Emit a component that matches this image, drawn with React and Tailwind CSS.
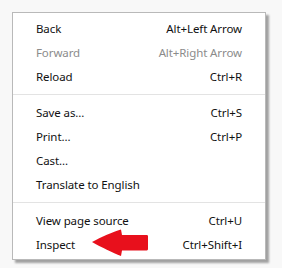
import React from 'react';

const groups = [
  [
    { label: 'Back', shortcut: 'Alt+Left Arrow' },
    { label: 'Forward', shortcut: 'Alt+Right Arrow', disabled: true },
    { label: 'Reload', shortcut: 'Ctrl+R' },
  ],
  [
    { label: 'Save as...', shortcut: 'Ctrl+S' },
    { label: 'Print...', shortcut: 'Ctrl+P' },
    { label: 'Cast...' },
    { label: 'Translate to English' },
  ],
  [
    { label: 'View page source', shortcut: 'Ctrl+U' },
    { label: 'Inspect', shortcut: 'Ctrl+Shift+I' },
  ],
];

function Row({ item }) {
  return (
    <div
      className={`flex h-[24px] items-center justify-between pl-[23px] pr-[23px] ${
        item.disabled ? 'text-[#8b8b8b]' : 'text-[#111]'
      }`}
    >
      <span>{item.label}</span>
      {item.shortcut && <span>{item.shortcut}</span>}
    </div>
  );
}

export default function App() {
  return (
    <div className="h-[268px] w-[282px] bg-[#f8f8f8] p-[12px]">
      <div className="relative">
        <div
          className="w-[254px] border border-[#b9b9b9] bg-white pt-[4px] pb-[2px] text-[11.5px] leading-none tracking-[-0.1px] shadow-[3px_3px_2px_rgba(0,0,0,0.35)]"
          style={{ fontFamily: '"Noto Sans", "Open Sans", sans-serif' }}
        >
          {groups.map((group, gi) => (
            <div key={gi}>
              {gi > 0 && <div className="mt-[5px] mb-[6px] h-px bg-[#e3e3e3]" />}
              {group.map((item) => (
                <Row key={item.label} item={item} />
              ))}
            </div>
          ))}
        </div>
        <svg
          className="absolute left-[79px] top-[217px]"
          width="58"
          height="28"
          viewBox="0 0 58 28"
        >
          <path
            d="M1 13 C 10 8, 22 3, 30 0.5 L 31 6 L 56 6 C 57 6, 57 7, 57 8 L 57 20 C 57 21, 56 21.5, 55 21.5 L 31 21.5 L 30 27 C 22 24, 10 18, 1 13 Z"
            fill="#e8101c"
          />
        </svg>
      </div>
    </div>
  );
}
